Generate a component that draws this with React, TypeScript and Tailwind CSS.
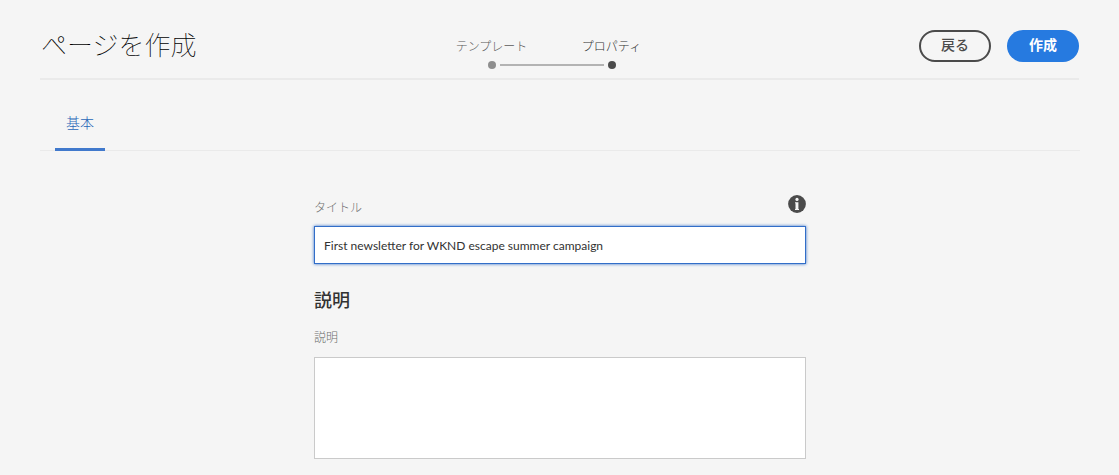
import { useState } from "react";

const steps = [
  { label: "テンプレート", current: false },
  { label: "プロパティ", current: true },
];

function Stepper() {
  return (
    <ol className="flex pr-4" aria-label="手順">
      {steps.map((step, index) => (
        <li
          key={step.label}
          aria-current={step.current ? "step" : undefined}
          className="relative flex w-30 flex-col items-center gap-[5px]"
        >
          <span
            className={
              step.current
                ? "text-xs leading-5 font-light whitespace-nowrap text-[#323232]"
                : "text-xs leading-5 font-light whitespace-nowrap text-[#5a5a5a]"
            }
          >
            {step.label}
          </span>
          <span
            className={
              step.current
                ? "size-2 rounded-full bg-[#4b4b4b]"
                : "size-2 rounded-full bg-[#8e8e8e]"
            }
          />
          {index < steps.length - 1 && (
            <span className="absolute bottom-[3px] left-[68px] h-0.5 w-[104px] bg-[#b3b3b3]" />
          )}
        </li>
      ))}
    </ol>
  );
}

function InfoIcon() {
  return (
    <svg viewBox="0 0 18 18" className="size-[18px]" aria-hidden="true">
      <circle cx="9" cy="9" r="8.9" fill="#4b4b4b" />
      <circle cx="9" cy="4.4" r="1.6" fill="#f5f5f5" />
      <path d="M7 7.2h3.4v6.9h.6v1H7v-1h.5V8.2H7z" fill="#f5f5f5" />
    </svg>
  );
}

export default function App() {
  const [title, setTitle] = useState("First newsletter for WKND escape summer campaign");
  const [description, setDescription] = useState("");

  return (
    <div
      lang="ja"
      className="min-h-screen bg-[#f5f5f5] pb-4 font-['Noto_Sans_CJK_JP',sans-serif] font-thin text-[#323232]"
    >
      <header className="mx-10 grid grid-cols-[1fr_auto_1fr] items-start border-b-2 border-[#eaeaea] pb-[9px] pt-[30px]">
        <h1 className="pl-px text-[26px] leading-7 whitespace-nowrap text-black">ページを作成</h1>
        <div className="pt-[6px]">
          <Stepper />
        </div>
        <div className="flex justify-end gap-4">
          <button
            type="button"
            className="flex h-8 w-18 items-center justify-center rounded-full border-2 border-[#4b4b4b] pb-1 text-sm font-medium text-[#4b4b4b]"
          >
            戻る
          </button>
          <button
            type="button"
            className="flex h-8 w-18 items-center justify-center rounded-full bg-[#267ae0] pb-1 text-sm font-bold text-white"
          >
            作成
          </button>
        </div>
      </header>

      <main className="pl-10 pr-[39px]">
        <div role="tablist" className="flex border-b border-[#eaeaea] px-[15px] pt-7">
          <button
            type="button"
            role="tab"
            aria-selected="true"
            className="-mb-px flex h-[43px] items-start border-b-[3px] border-[#4179cc] px-[11px] pt-0.5 text-sm leading-6 font-light text-[#2765b8]"
          >
            基本
          </button>
        </div>

        <form className="mx-auto flex max-w-[492px] flex-col pt-11">
          <div className="flex justify-between">
            <label htmlFor="title" className="pt-1 text-xs leading-4 font-light text-[#6e6e6e]">
              タイトル
            </label>
            <button type="button" aria-label="情報" className="size-[18px]">
              <InfoIcon />
            </button>
          </div>
          <input
            id="title"
            type="text"
            value={title}
            onChange={(event) => setTitle(event.target.value)}
            className="mt-[11px] h-[38px] border border-[#326ec8] bg-white px-[9px] font-['Lato',sans-serif] text-xs font-normal text-[#323232] shadow-[0_0_3px_#326ec8] outline-none"
          />
          <h2 className="mt-[23px] text-lg leading-6 font-medium text-[#323232]">説明</h2>
          <label htmlFor="description" className="mt-4 text-xs leading-5 font-light text-[#6e6e6e]">
            説明
          </label>
          <textarea
            id="description"
            value={description}
            onChange={(event) => setDescription(event.target.value)}
            className="mt-[10px] h-[102px] resize-none border border-[#cacaca] bg-white p-2 text-sm outline-none"
          />
        </form>
      </main>
    </div>
  );
}
